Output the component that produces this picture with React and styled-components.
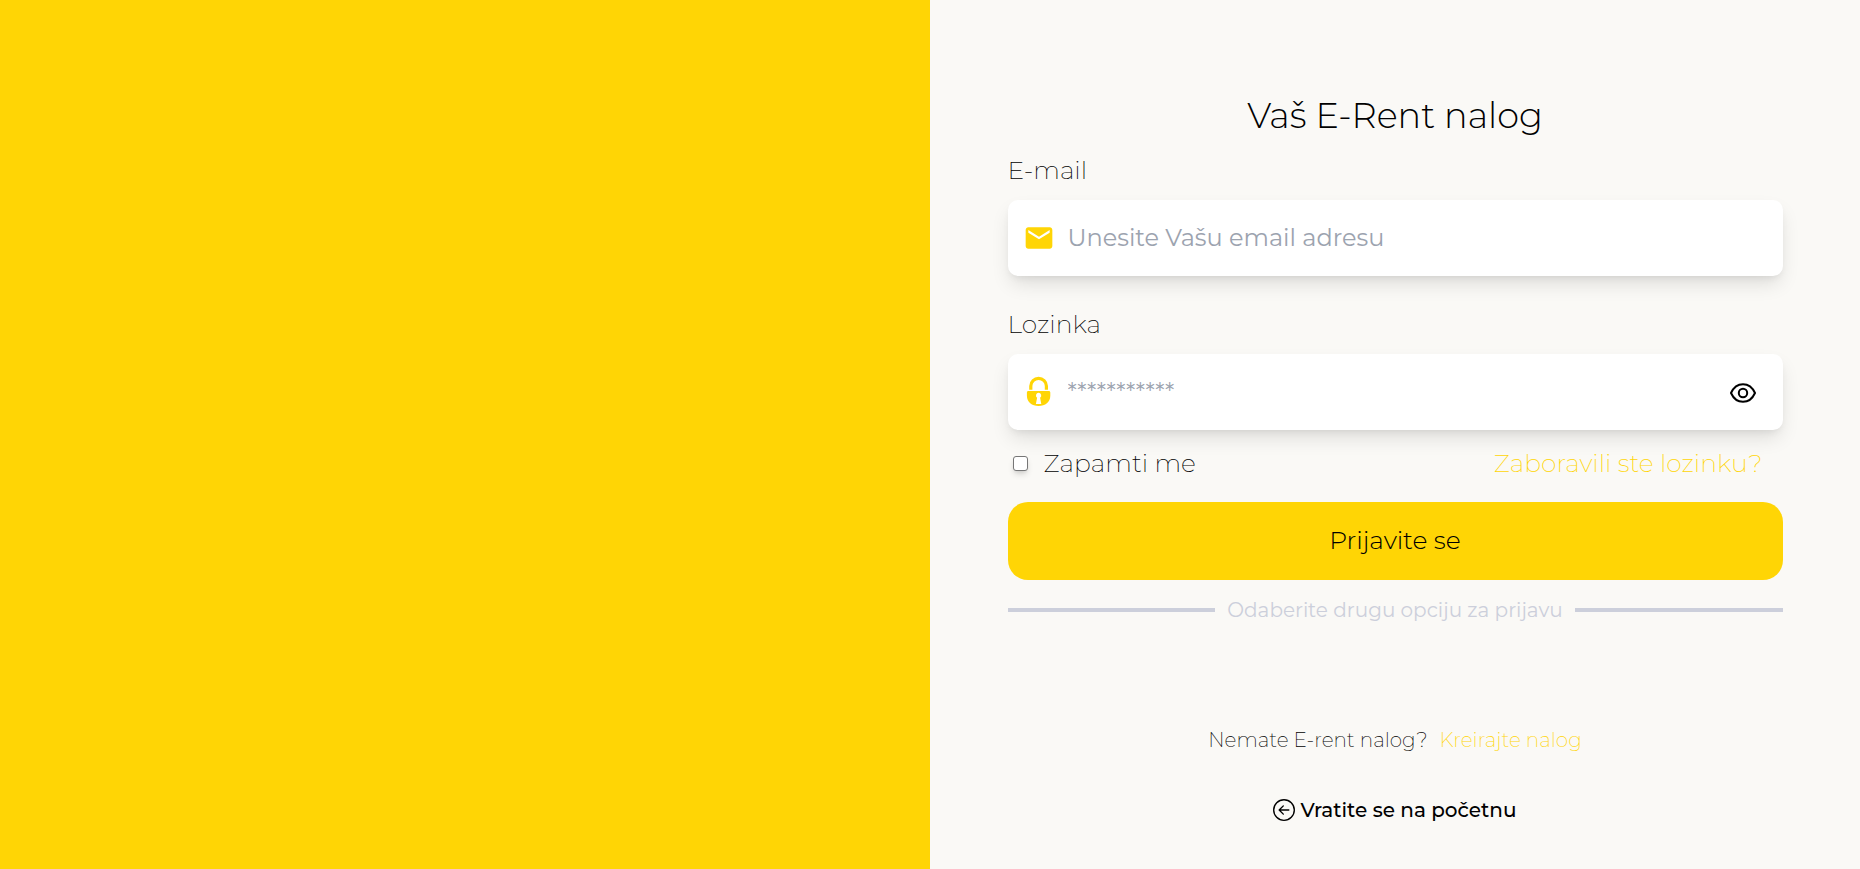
import React, { useState } from "react";
import styled, { createGlobalStyle } from "styled-components";
import { MdEmail } from "react-icons/md";
import { BsArrowLeftCircle } from "react-icons/bs";

const GlobalStyle = createGlobalStyle`
  *, *::before, *::after { box-sizing: border-box; }
  body {
    margin: 0;
    background: #faf9f6;
    color: #000;
    font-family: Montserrat, Inter, "Open Sans", sans-serif;
    font-size: 25px;
    line-height: 32px;
  }
  button, input { font: inherit; color: inherit; }
  a { text-decoration: none; }
`;

const Page = styled.main`
  display: grid;
  grid-template-columns: 1fr 1fr;
  min-height: 100vh;
`;

const BrandPanel = styled.section`
  background: #ffd505;
`;

const FormPanel = styled.section`
  display: grid;
  grid-template-columns: 1fr 10fr 1fr;
  align-content: start;
  padding: 96px 0 40px;
`;

const Form = styled.form`
  grid-column: 2;
  display: flex;
  flex-direction: column;
`;

const Title = styled.h1`
  margin: 0 0 18px;
  font-size: 35px;
  line-height: 40px;
  font-weight: 300;
  text-align: center;
`;

const Field = styled.div`
  display: flex;
  flex-direction: column;
  gap: 14px;
  margin-bottom: ${({ $last }) => ($last ? 17 : 32)}px;
`;

const Label = styled.label`
  font-weight: 200;
`;

const InputBox = styled.div`
  display: flex;
  align-items: center;
  gap: 13px;
  height: 76px;
  padding: 0 26px 0 15px;
  border-radius: 10px;
  background: #fff;
  box-shadow: 0 10px 20px -3px rgb(0 0 0 / 12%), 0 4px 8px -4px rgb(0 0 0 / 10%);

  > svg { flex: none; color: #ffd505; }
`;

const TextInput = styled.input`
  flex: 1;
  min-width: 0;
  padding: 0;
  border: 0;
  outline: 0;
  background: transparent;
  font-size: 24px;
  font-weight: 400;

  &::placeholder { color: #9ca3af; opacity: 1; }
`;

const IconButton = styled.button`
  display: flex;
  padding: 0;
  border: 0;
  background: transparent;
  cursor: pointer;
`;

const OptionsRow = styled.div`
  display: flex;
  align-items: center;
  justify-content: space-between;
  padding: 0 20px 0 5px;
  margin-bottom: 23px;
`;

const Remember = styled.label`
  display: flex;
  align-items: center;
  gap: 16px;
  font-weight: 200;
`;

const Checkbox = styled.input`
  appearance: none;
  width: 15px;
  height: 15px;
  margin: 0;
  border: 1px solid #767676;
  border-radius: 3px;
  background: #fff;
  box-shadow: 0 4px 6px -1px rgb(0 0 0 / 14%), 0 2px 4px -2px rgb(0 0 0 / 12%);

  &:checked { background: #ffd505; }
`;

const YellowLink = styled.a`
  color: #ffd505;
  font-weight: 200;
`;

const Submit = styled.button`
  height: 78px;
  padding: 0 0 2px;
  border: 0;
  border-radius: 20px;
  background: #ffd505;
  font-weight: 300;
  cursor: pointer;
`;

const Divider = styled.div`
  display: flex;
  align-items: center;
  gap: 12px;
  margin-top: 16px;
  color: #cccfdb;
  font-size: 20px;
  line-height: 28px;
  font-weight: 400;

  &::before, &::after {
    content: "";
    flex: 1;
    height: 4px;
    background: #cccfdb;
  }
`;

const Footer = styled.footer`
  grid-column: 2;
  display: flex;
  flex-direction: column;
  align-items: center;
  gap: 42px;
  margin-top: 102px;
  font-size: 20px;
  line-height: 28px;
`;

const SignUp = styled.p`
  display: flex;
  gap: 12px;
  margin: 0;
  font-weight: 200;
`;

const BackLink = styled.a`
  display: flex;
  align-items: center;
  gap: 5px;
  color: #000;
  font-weight: 500;
`;

function LockIcon() {
  return (
    <svg width="32" height="32" viewBox="0 0 32 32" aria-hidden="true">
      <path d="M7.800 13.800V10A7.800 7.600 0 0 1 23.400 10V13.800" fill="none" stroke="currentColor" strokeWidth="3.200" />
      <path
        d="M5.500 15h20.200c1 0 1.600.6 1.600 1.600v3.200C27.300 26.200 22.200 30 15.600 30S3.900 26.200 3.900 19.800v-3.200c0-1 .6-1.600 1.600-1.600ZM15.600 16.800a2.700 2.700 0 0 0-1.500 4.900L12.900 28h5.400l-1.200-6.300a2.700 2.700 0 0 0-1.500-4.900Z"
        fill="currentColor"
        fillRule="evenodd"
      />
    </svg>
  );
}

function EyeIcon() {
  return (
    <svg width="28" height="28" viewBox="0 0 28 28" fill="none" stroke="currentColor" strokeWidth="2" aria-hidden="true">
      <path d="M2 15C4.500 9.500 8.500 6.200 14 6.200S23.500 9.500 26 15C23.500 20.500 19.500 23.800 14 23.800S4.500 20.500 2 15Z" strokeLinejoin="round" />
      <circle cx="14" cy="15" r="4.200" />
    </svg>
  );
}

export default function App() {
  const [visible, setVisible] = useState(false);

  return (
    <>
      <GlobalStyle />
      <Page>
        <BrandPanel />
        <FormPanel>
          <Form onSubmit={(event) => event.preventDefault()}>
            <Title>Vaš E-Rent nalog</Title>
            <Field>
              <Label htmlFor="email">E-mail</Label>
              <InputBox>
                <MdEmail size={32} />
                <TextInput id="email" type="email" placeholder="Unesite Vašu email adresu" />
              </InputBox>
            </Field>
            <Field $last>
              <Label htmlFor="password">Lozinka</Label>
              <InputBox>
                <LockIcon />
                <TextInput id="password" type={visible ? "text" : "password"} placeholder="***********" />
                <IconButton type="button" aria-label="Prikaži lozinku" onClick={() => setVisible(!visible)}>
                  <EyeIcon />
                </IconButton>
              </InputBox>
            </Field>
            <OptionsRow>
              <Remember>
                <Checkbox type="checkbox" />
                Zapamti me
              </Remember>
              <YellowLink href="#lozinka">Zaboravili ste lozinku?</YellowLink>
            </OptionsRow>
            <Submit type="submit">Prijavite se</Submit>
            <Divider>Odaberite drugu opciju za prijavu</Divider>
          </Form>
          <Footer>
            <SignUp>
              Nemate E-rent nalog?
              <YellowLink href="#registracija">Kreirajte nalog</YellowLink>
            </SignUp>
            <BackLink href="#pocetna">
              <BsArrowLeftCircle size={22} />
              Vratite se na početnu
            </BackLink>
          </Footer>
        </FormPanel>
      </Page>
    </>
  );
}
